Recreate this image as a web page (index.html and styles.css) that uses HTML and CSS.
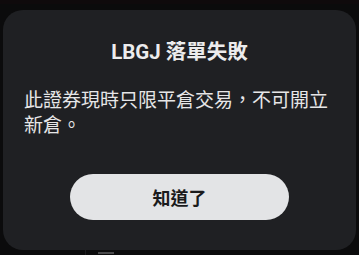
FILE: index.html
```html
<!DOCTYPE html>
<html lang="zh-Hant">
<head>
  <meta charset="UTF-8" />
  <meta name="viewport" content="width=device-width, initial-scale=1.0"/>
  <title>落單失敗</title>
  <link rel="stylesheet" href="styles.css">
</head>
<body>
  <div class="top-strip"></div>

  <div class="dialog">
    <div class="dialog-title">LBGJ 落單失敗</div>
    <div class="dialog-text">此證券現時只限平倉交易，不可開立新倉。</div>
    <button class="btn">知道了</button>
  </div>

  <!-- page behind the dialog, mostly hidden -->
  <div class="behind">
    <span class="behind-line"></span>
    <span class="behind-mark"></span>
  </div>
</body>
</html>
```

FILE: styles.css
```css
body {
  margin: 0;
  padding: 0;
  background: #0b0b0c;
  font-family: Roboto, "Noto Sans CJK TC", sans-serif;
  height: 255px;
  overflow: hidden;
  position: relative;
}

.top-strip {
  height: 4px;
  background: #0f0a0c;
}

.dialog {
  margin: 6px 3px 0;
  height: 240px;
  box-sizing: border-box;
  padding: 28px 21px 30px;
  background: #1f2023;
  border-radius: 20px;
  display: flex;
  flex-direction: column;
  align-items: center;
}

.dialog-title {
  font-size: 20.5px;
  line-height: 28px;
  font-weight: bold;
  color: #ececed;
  text-align: center;
}

.dialog-text {
  align-self: stretch;
  margin-top: 22px;
  font-size: 19px;
  line-height: 25px;
  color: #e6e6e7;
}

.btn {
  margin-top: 36px;
  width: 219px;
  height: 46px;
  border: none;
  border-radius: 23px;
  background: #e3e4e6;
  color: #1b1b1c;
  font-family: Roboto, "Noto Sans CJK TC", sans-serif;
  font-size: 18px;
  font-weight: bold;
  cursor: pointer;
}

.behind {
  position: absolute;
  left: 0;
  top: 250px;
  width: 100%;
  height: 5px;
}

.behind-line {
  position: absolute;
  left: 85px;
  top: 0;
  width: 1px;
  height: 5px;
  background: #1c1c1e;
}

.behind-mark {
  position: absolute;
  left: 98px;
  top: 2px;
  width: 16px;
  height: 2px;
  background: #48484a;
}
```
